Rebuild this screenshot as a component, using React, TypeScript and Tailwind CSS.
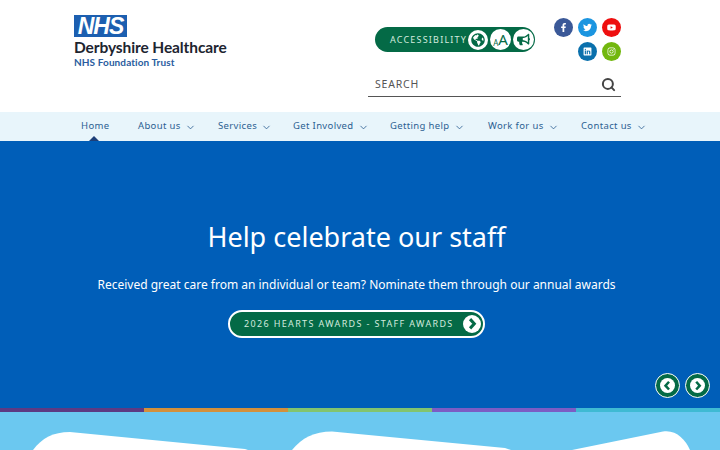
import { ChevronDown, Search } from 'lucide-react';
import { FaFacebookF, FaTwitter, FaYoutube, FaLinkedin, FaInstagram, FaBullhorn, FaGlobeAmericas } from 'react-icons/fa';

const NAV_ITEMS = [
  { label: 'Home', width: 'w-[57px]', active: true },
  { label: 'About us', width: 'w-[80px]' },
  { label: 'Services', width: 'w-[75px]' },
  { label: 'Get Involved', width: 'w-[97px]' },
  { label: 'Getting help', width: 'w-[98px]' },
  { label: 'Work for us', width: 'w-[93px]' },
  { label: 'Contact us', width: 'w-[85px]' },
];

const STRIPES = ['bg-[#5d3a83]', 'bg-[#d3903c]', 'bg-[#82c46f]', 'bg-[#7c5cc4]', 'bg-[#3fbad3]'];

const CircleChevron = ({ left = false, size = 'w-[18px] h-[18px]' }: { left?: boolean; size?: string }) => (
  <span className={`${size} shrink-0 rounded-full bg-white flex items-center justify-center`}>
    <svg viewBox="0 0 16 16" className="w-[75%] h-[75%]">
      <path
        d={left ? 'M10 2.5 L5 8 L10 13.5' : 'M6 2.5 L11 8 L6 13.5'}
        fill="none"
        stroke="#046a46"
        strokeWidth="3.6"
      />
    </svg>
  </span>
);

const Social = ({ bg, children }: { bg: string; children: React.ReactNode }) => (
  <span className={`w-[19px] h-[19px] rounded-full ${bg} flex items-center justify-center text-white text-[9px]`}>
    {children}
  </span>
);

export default function App() {
  return (
    <div className="w-[720px] h-[450px] overflow-hidden bg-white font-['Noto_Sans','Open_Sans',sans-serif]">
      <header className="h-[112px] flex justify-between pl-[74px] pr-[99px]">
        <div className="pt-[15px] font-['Lato',sans-serif]">
          <div className="w-[53px] h-[22px] bg-[#1c5fb0] flex items-center justify-center">
            <span className="font-['Liberation_Sans',sans-serif] font-bold italic text-white text-[23px] leading-none tracking-[-1px]">
              NHS
            </span>
          </div>
          <div className="mt-[2px] text-[15.5px] leading-[16px] font-bold text-[#1d2530] tracking-[-0.1px]">
            Derbyshire Healthcare
          </div>
          <div className="mt-[1px] text-[10px] leading-[12px] font-bold text-[#2a5c9e] tracking-[0.1px]">
            NHS Foundation Trust
          </div>
        </div>

        <div className="w-[253px] pt-[18px]">
          <div className="flex justify-between pl-[7px] h-[54px]">
            <div className="mt-[9px] w-[160px] h-[25px] rounded-full bg-[#046a46] flex items-center pl-[15px] pr-[1px]">
              <span className="text-[9px] tracking-[1.2px] text-[#d3eadf] whitespace-nowrap">ACCESSIBILITY</span>
              <div className="ml-auto flex items-center gap-[2px]">
                <span className="w-[20px] h-[20px] shrink-0 rounded-full bg-white flex items-center justify-center text-[#046a46] text-[14px]">
                  <FaGlobeAmericas />
                </span>
                <span className="w-[21px] h-[21px] shrink-0 rounded-full bg-white flex items-end justify-center pb-[3px] text-[#046a46] leading-none">
                  <span className="text-[8px]">A</span>
                  <span className="text-[15px]">A</span>
                </span>
                <span className="w-[21px] h-[21px] shrink-0 rounded-full bg-white flex items-center justify-center text-[#046a46] text-[13px]">
                  <FaBullhorn />
                </span>
              </div>
            </div>
            <div className="w-[68px] flex flex-col items-end gap-[5px]">
              <div className="flex gap-[5px]">
                <Social bg="bg-[#3b5998]"><FaFacebookF /></Social>
                <Social bg="bg-[#1b95e0]"><FaTwitter /></Social>
                <Social bg="bg-[#ee0f0f]"><FaYoutube /></Social>
              </div>
              <div className="flex gap-[5px]">
                <Social bg="bg-[#0a70ac]"><FaLinkedin /></Social>
                <Social bg="bg-[#72b70e]"><FaInstagram /></Social>
              </div>
            </div>
          </div>
          <div className="h-[25px] flex items-center justify-between border-b border-[#555] pl-[7px] pr-[5px]">
            <span className="pt-[1px] text-[10.5px] tracking-[0.8px] text-[#555]">SEARCH</span>
            <Search className="w-[15px] h-[15px] text-[#444]" strokeWidth={3.2} />
          </div>
        </div>
      </header>

      <nav className="h-[29px] bg-[#e8f5fb] pl-[62px] flex">
        {NAV_ITEMS.map((item) => (
          <div
            key={item.label}
            className={`${item.width} relative pl-[19px] shrink-0 flex items-center gap-[3px] text-[9.5px] tracking-[0.35px] text-[#2c5f92] whitespace-nowrap`}
          >
            <span>{item.label}</span>
            {!item.active && <ChevronDown className="ml-[1px] w-[11px] h-[11px] mt-[1px] shrink-0 text-[#2c5f92]" strokeWidth={1.8} />}
            {item.active && (
              <span className="absolute bottom-0 left-[27px] w-0 h-0 border-x-[5px] border-x-transparent border-b-[5px] border-b-[#1d3f78]" />
            )}
          </div>
        ))}
      </nav>

      <section className="relative h-[267px] bg-[#005eb8] flex flex-col items-center text-white">
        <h1 className="mt-[77px] ml-[-7px] text-[27px] leading-[38px]">Help celebrate our staff</h1>
        <p className="mt-[20px] ml-[-7px] text-[12px] leading-[18px]">
          Received great care from an individual or team? Nominate them through our annual awards
        </p>
        <div className="mt-[16px] ml-[-7px] w-[257px] h-[28px] rounded-full bg-[#046a46] border-2 border-white flex items-center justify-between pl-[14px] pr-[2px]">
          <span className="text-[9px] tracking-[1.35px] text-[#d3eadf] whitespace-nowrap">
            2026 HEARTS AWARDS - STAFF AWARDS
          </span>
          <CircleChevron />
        </div>
        <div className="absolute right-[10px] bottom-[10px] flex gap-[5px]">
          <span className="w-[25px] h-[25px] rounded-full bg-[#046a46] border-[1.5px] border-white flex items-center justify-center">
            <CircleChevron left size="w-[15px] h-[15px]" />
          </span>
          <span className="w-[25px] h-[25px] rounded-full bg-[#046a46] border-[1.5px] border-white flex items-center justify-center">
            <CircleChevron size="w-[15px] h-[15px]" />
          </span>
        </div>
      </section>

      <div className="flex h-[4px]">
        {STRIPES.map((stripe) => (
          <div key={stripe} className={`flex-1 ${stripe}`} />
        ))}
      </div>

      <div className="h-[38px] bg-[#6bc8f0]">
        <svg viewBox="0 0 720 38" className="w-[720px] h-[38px] block">
          <path d="M33 38 C42 26 53 20 70 20 L245 37 L248 38 Z" fill="#fff" />
          <path d="M292 38 C302 26 314 19.5 332 19.5 L505 36 L511 38 Z" fill="#fff" />
          <path d="M572 38 L663 19.5 C676 17.5 685 27 690 38 Z" fill="#fff" />
        </svg>
      </div>
    </div>
  );
}
